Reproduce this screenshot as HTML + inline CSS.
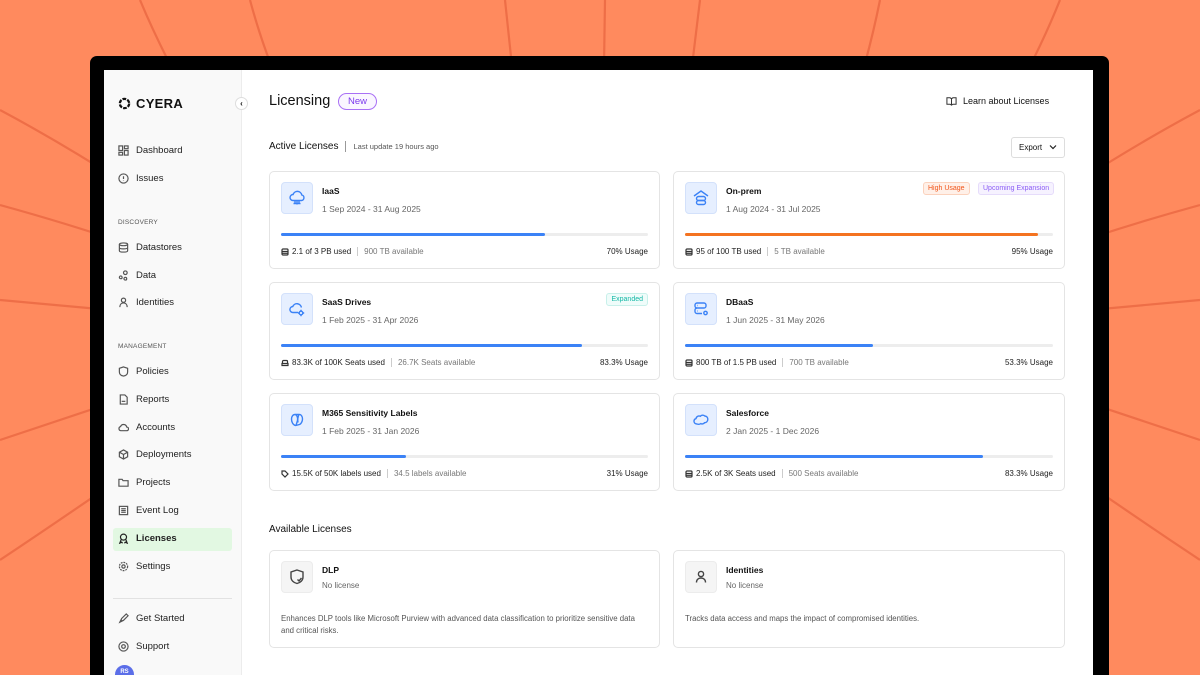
<!DOCTYPE html>
<html style="overflow:hidden;width:1200px;height:675px"><head><meta charset="utf-8"><style>
*{box-sizing:border-box;margin:0;padding:0}
body{width:1200px;height:675px;overflow:hidden;background:#FF8A5E;font-family:"Liberation Sans",sans-serif;color:#111;position:relative}
.abs{position:absolute}
.frame{left:90px;top:56px;width:1019px;height:619px;background:#000;border-radius:7px 7px 0 0}
.screen{left:104px;top:70px;width:989px;height:605px;background:#fff;overflow:hidden}
.side{left:0;top:0;width:138px;height:605px;background:#f9f9f9;border-right:1px solid #ececec}
.nav{position:absolute;left:14px;font-size:9.5px;color:#222;display:flex;align-items:center;gap:7px}
.nav svg{width:11px;height:11px;stroke:#555;fill:none;stroke-width:1.3}
.sec{position:absolute;left:14px;font-size:6.5px;color:#555;letter-spacing:.2px}
.card{position:absolute;border:1px solid #e4e4e4;border-radius:5px;background:#fff}
.ib{position:absolute;left:11px;top:10px;width:32px;height:32px;border-radius:4px;background:#e6efff;border:1px solid #d3e1fb;display:flex;align-items:center;justify-content:center}
.ib svg{width:20px;height:20px;stroke:#3b82f6;fill:none;stroke-width:1.4}
.t{position:absolute;left:52px;top:14px;font-size:8.5px;font-weight:bold;color:#111}
.d{position:absolute;left:52px;top:32px;font-size:8.5px;color:#666}
.bar{position:absolute;left:11px;right:11px;top:61px;height:3px;background:#ededed;border-radius:2px}
.bar i{display:block;height:3px;background:#3b82f6;border-radius:2px}
.f{position:absolute;left:11px;right:11px;top:75px;font-size:8px;color:#222;display:flex;align-items:center}
.f .a{color:#777;border-left:1px solid #ccc;padding-left:6px;margin-left:6px}
.f .u{margin-left:auto}
.f svg{width:8px;height:8px;stroke:#333;fill:none;stroke-width:1.2;margin-right:3px}
.tag{position:absolute;top:10px;font-size:7px;padding:2px 4px;border-radius:3px}
</style></head><body>
<svg class="abs" style="left:0;top:0" width="1200" height="675" stroke="#EE6E47" stroke-width="2.2" fill="none">
<path d="M140 0 Q190 120 330 330"/><path d="M250 0 Q290 150 420 330"/><path d="M505 0 L540 330"/><path d="M605 0 L600 330"/><path d="M700 0 L660 330"/><path d="M880 0 Q850 150 760 330"/><path d="M1060 0 Q1000 150 850 330"/>
<path d="M0 110 Q150 190 330 330"/><path d="M0 205 Q200 260 330 330"/><path d="M0 300 L330 330"/><path d="M0 440 Q150 390 330 330"/>
<path d="M1200 110 Q1050 190 870 330"/><path d="M1200 205 Q1000 260 870 330"/><path d="M1200 300 L870 330"/><path d="M1200 440 Q1050 390 870 330"/>
<path d="M0 560 Q150 460 330 330"/><path d="M1200 560 Q1050 460 870 330"/>
</svg>
<div class="abs frame"></div>
<div class="abs screen">
<div class="abs side">
 <div class="abs" style="left:14px;top:26px;display:flex;align-items:center;gap:5px;font-size:13px;font-weight:bold;letter-spacing:.3px">
  <svg width="13" height="13" viewBox="0 0 14 14"><circle cx="7" cy="7" r="5" fill="none" stroke="#111" stroke-width="2.4" stroke-dasharray="4 1.3"/></svg>CYERA</div>
 <div class="abs" style="left:131px;top:27px;width:13px;height:13px;border-radius:50%;background:#fff;border:1px solid #ddd;font-size:8px;line-height:11px;text-align:center;font-weight:bold">‹</div>
 <div class="nav" style="top:75px"><svg viewBox="0 0 12 12"><rect x="1" y="1" width="4" height="5"/><rect x="7" y="1" width="4" height="3"/><rect x="1" y="8" width="4" height="3"/><rect x="7" y="6" width="4" height="5"/></svg>Dashboard</div>
 <div class="nav" style="top:103px"><svg viewBox="0 0 12 12"><circle cx="6" cy="6" r="5"/><path d="M6 3.5v3M6 8v.5"/></svg>Issues</div>
 <div class="sec" style="top:149px">DISCOVERY</div>
 <div class="nav" style="top:172px"><svg viewBox="0 0 12 12"><ellipse cx="6" cy="2.5" rx="4.5" ry="1.5"/><path d="M1.5 2.5v7c0 1 2 1.5 4.5 1.5s4.5-.5 4.5-1.5v-7M1.5 6c0 1 2 1.5 4.5 1.5s4.5-.5 4.5-1.5"/></svg>Datastores</div>
 <div class="nav" style="top:200px"><svg viewBox="0 0 12 12"><circle cx="8" cy="3" r="2"/><circle cx="3" cy="8" r="1.5"/><circle cx="8" cy="9.5" r="1.5"/></svg>Data</div>
 <div class="nav" style="top:227px"><svg viewBox="0 0 12 12"><circle cx="6" cy="3.5" r="2.3"/><path d="M2 11c0-3 1.8-4.5 4-4.5s4 1.5 4 4.5"/></svg>Identities</div>
 <div class="sec" style="top:273px">MANAGEMENT</div>
 <div class="nav" style="top:296px"><svg viewBox="0 0 12 12"><path d="M6 1l4.5 1.5v4c0 2.5-2 4-4.5 4.5-2.5-.5-4.5-2-4.5-4.5v-4z"/></svg>Policies</div>
 <div class="nav" style="top:324px"><svg viewBox="0 0 12 12"><path d="M2.5 1h5l2.5 2.5V11h-7.5z"/><path d="M4 8h4"/></svg>Reports</div>
 <div class="nav" style="top:352px"><svg viewBox="0 0 12 12"><path d="M3 9.5h6.5a2 2 0 0 0 0-4 3.5 3.5 0 0 0-6.7-.5A2.3 2.3 0 0 0 3 9.5z"/></svg>Accounts</div>
 <div class="nav" style="top:379px"><svg viewBox="0 0 12 12"><path d="M6 1l4.5 2.5v5L6 11 1.5 8.5v-5zM1.5 3.5 6 6l4.5-2.5M6 6v5"/></svg>Deployments</div>
 <div class="nav" style="top:407px"><svg viewBox="0 0 12 12"><path d="M1 2.5h3.5l1 1.5H11v6H1z"/></svg>Projects</div>
 <div class="nav" style="top:435px"><svg viewBox="0 0 12 12"><rect x="1.5" y="1.5" width="9" height="9"/><path d="M3.5 4h5M3.5 6h5M3.5 8h5"/></svg>Event Log</div>
 <div class="abs" style="left:9px;top:458px;width:119px;height:23px;background:#e2f8e2;border-radius:3px"></div>
 <div class="nav" style="top:463px;font-weight:bold"><svg viewBox="0 0 12 12" style="stroke:#222"><circle cx="6" cy="4.5" r="3.3"/><path d="M3.5 7l-1.5 4 2-1 1 1.2M8.5 7l1.5 4-2-1-1 1.2"/></svg>Licenses</div>
 <div class="nav" style="top:491px"><svg viewBox="0 0 12 12"><circle cx="6" cy="6" r="1.8"/><circle cx="6" cy="6" r="4.5" stroke-dasharray="2 1"/></svg>Settings</div>
 <div class="abs" style="left:9px;top:528px;width:119px;border-top:1px solid #e2e2e2"></div>
 <div class="nav" style="top:543px"><svg viewBox="0 0 12 12"><path d="M2 10l2-4 5-5 2 2-5 5zM3 7l2 2"/></svg>Get Started</div>
 <div class="nav" style="top:571px"><svg viewBox="0 0 12 12"><circle cx="6" cy="6" r="5"/><circle cx="6" cy="6" r="2"/></svg>Support</div>
 <div class="abs" style="left:11px;top:595px;width:19px;height:19px;border-radius:50%;background:#5b6ee8;color:#fff;font-size:6px;text-align:center;line-height:14px;font-weight:bold">RS</div>
</div>
<div class="abs" style="left:165px;top:23px;font-size:14.5px">Licensing</div>
<div class="abs" style="left:234px;top:23px;width:39px;height:17px;border:1px solid #a970f5;border-radius:9px;color:#7c3aed;font-size:9.5px;text-align:center;line-height:15px;background:#faf6ff">New</div>
<div class="abs" style="left:842px;top:26px;font-size:9px;display:flex;align-items:center;gap:6px"><svg width="11" height="10" viewBox="0 0 12 10" fill="none" stroke="#333" stroke-width="1.1"><path d="M1 1.5h3.5L6 2.5l1.5-1H11v7H7.5L6 9.5 4.5 8.5H1zM6 2.5v7"/></svg>Learn about Licenses</div>
<div class="abs" style="left:165px;top:71px;font-size:10px;display:flex;align-items:center"><span>Active Licenses</span><span style="border-left:1px solid #999;height:11px;margin:0 7px"></span><span style="font-size:7.5px;color:#555">Last update 19 hours ago</span></div>
<div class="abs" style="left:907px;top:67px;width:54px;height:21px;border:1px solid #ddd;border-radius:3px;font-size:8px;line-height:19px;padding-left:7px">Export <svg style="position:absolute;right:7px;top:6px" width="8" height="6" viewBox="0 0 8 6" fill="none" stroke="#222" stroke-width="1.2"><path d="M1 1.5l3 3 3-3"/></svg></div>

<div class="card" style="left:165px;top:101px;width:391px;height:98px">
 <div class="ib"><svg viewBox="0 0 20 20"><path d="M6 12.5h8.5a2.8 2.8 0 0 0 .3-5.5 4.5 4.5 0 0 0-8.7-.5A3 3 0 0 0 6 12.5zM8 12.5v3M10 12.5v4M12 12.5v3M6.5 15.5h3M10.5 15.5h3"/></svg></div>
 <div class="t">IaaS</div><div class="d">1 Sep 2024 - 31 Aug 2025</div>
 <div class="bar"><i style="width:72%"></i></div>
 <div class="f"><svg viewBox="0 0 8 8"><rect x="1" y="1" width="6" height="6" rx="1"/><path d="M1 3.5h6M1 5.3h6"/></svg>2.1 of 3 PB used<span class="a">900 TB available</span><span class="u">70% Usage</span></div>
</div>
<div class="card" style="left:569px;top:101px;width:392px;height:98px">
 <div class="ib"><svg viewBox="0 0 20 20"><path d="M3 8l7-5 7 5"/><rect x="5.5" y="8.5" width="9" height="4" rx="2"/><rect x="5.5" y="12.5" width="9" height="4" rx="2"/></svg></div>
 <div class="t">On-prem</div><div class="d">1 Aug 2024 - 31 Jul 2025</div>
 <div class="tag" style="left:249px;color:#f0551a;background:#fff0e8;border:1px solid #fbd2bd">High Usage</div>
 <div class="tag" style="left:304px;color:#8b5cf6;background:#f6f2ff;border:1px solid #e6dcfb">Upcoming Expansion</div>
 <div class="bar"><i style="width:96%;background:#f47320"></i></div>
 <div class="f"><svg viewBox="0 0 8 8"><rect x="1" y="1" width="6" height="6" rx="1"/><path d="M1 3.5h6M1 5.3h6"/></svg>95 of 100 TB used<span class="a">5 TB available</span><span class="u">95% Usage</span></div>
</div>
<div class="card" style="left:165px;top:212px;width:391px;height:98px">
 <div class="ib"><svg viewBox="0 0 20 20"><path d="M11 13.5H6a3 3 0 0 1-.2-6 4.5 4.5 0 0 1 8.6 1"/><circle cx="14" cy="14" r="1.8"/><path d="M14 10.8v1.2M14 16v1.2M11 14h1.2M16 14h1.2"/></svg></div>
 <div class="t">SaaS Drives</div><div class="d">1 Feb 2025 - 31 Apr 2026</div>
 <div class="tag" style="right:11px;color:#14b8a6;background:#effcfa;border:1px solid #c8f0ea">Expanded</div>
 <div class="bar"><i style="width:82%"></i></div>
 <div class="f"><svg viewBox="0 0 8 8"><path d="M1.5 4.5V2.5a1 1 0 0 1 1-1h3a1 1 0 0 1 1 1v2M1 4.5h6v2H1z"/></svg>83.3K of 100K Seats used<span class="a">26.7K Seats available</span><span class="u">83.3% Usage</span></div>
</div>
<div class="card" style="left:569px;top:212px;width:392px;height:98px">
 <div class="ib"><svg viewBox="0 0 20 20"><rect x="4" y="4" width="11" height="5" rx="2"/><path d="M11 14.5H6a2 2 0 0 1-2-2v-1.5a2 2 0 0 1 2-2"/><path d="M6.5 6.5h.5M6.5 12h.5"/><circle cx="14.5" cy="14" r="1.7"/></svg></div>
 <div class="t">DBaaS</div><div class="d">1 Jun 2025 - 31 May 2026</div>
 <div class="bar"><i style="width:51%"></i></div>
 <div class="f"><svg viewBox="0 0 8 8"><rect x="1" y="1" width="6" height="6" rx="1"/><path d="M1 3.5h6M1 5.3h6"/></svg>800 TB of 1.5 PB used<span class="a">700 TB available</span><span class="u">53.3% Usage</span></div>
</div>
<div class="card" style="left:165px;top:323px;width:391px;height:98px">
 <div class="ib"><svg viewBox="0 0 20 20"><path d="M8 4.5c-2 0-3.5 2-3.5 4.5 0 3 1.5 6 4 6.5l4-1c1.5-.5 3-3 3-5.5S14 4 12 4.5z"/><path d="M8 4.5c2 .5 3 3 2.5 6l-1.5 5M12 4.5c-1 2-1.5 5-1 8"/></svg></div>
 <div class="t">M365 Sensitivity Labels</div><div class="d">1 Feb 2025 - 31 Jan 2026</div>
 <div class="bar"><i style="width:34%"></i></div>
 <div class="f"><svg viewBox="0 0 8 8"><path d="M1 1h3l3 3-3 3-3-3z"/></svg>15.5K of 50K labels used<span class="a">34.5 labels available</span><span class="u">31% Usage</span></div>
</div>
<div class="card" style="left:569px;top:323px;width:392px;height:98px">
 <div class="ib"><svg viewBox="0 0 20 20"><path d="M6 14c-2 0-3.3-1.5-3-3.2.2-1.3 1.2-2 2-2.2.3-2 2.5-3.2 4.3-2.3 1-1.3 3.2-1.5 4.5-.3 1.8 0 3.3 1.7 3 3.7-.2 1.8-1.5 3-3.200 3-.8 1.2-2.5 1.6-3.7.9-1.2.8-2.800.8-3.900.4z"/></svg></div>
 <div class="t">Salesforce</div><div class="d">2 Jan 2025 - 1 Dec 2026</div>
 <div class="bar"><i style="width:81%"></i></div>
 <div class="f"><svg viewBox="0 0 8 8"><rect x="1" y="1" width="6" height="6" rx="1"/><path d="M1 3.5h6M1 5.3h6"/></svg>2.5K of 3K Seats used<span class="a">500 Seats available</span><span class="u">83.3% Usage</span></div>
</div>

<div class="abs" style="left:165px;top:454px;font-size:10px">Available Licenses</div>
<div class="card" style="left:165px;top:480px;width:391px;height:98px">
 <div class="ib" style="background:#f5f5f5;border-color:#ececec"><svg viewBox="0 0 20 20" style="stroke:#444"><path d="M10 3l6 2v5c0 3.5-2.7 5.7-6 6.5-3.3-.8-6-3-6-6.5V5z"/><path d="M10.5 12.5l1.5 1.5 2.5-3"/></svg></div>
 <div class="t">DLP</div><div class="d" style="top:30px;font-size:8px">No license</div>
 <div class="abs" style="left:11px;top:62px;font-size:7.8px;color:#555;line-height:12px;width:360px">Enhances DLP tools like Microsoft Purview with advanced data classification to prioritize sensitive data and critical risks.</div>
</div>
<div class="card" style="left:569px;top:480px;width:392px;height:98px">
 <div class="ib" style="background:#f5f5f5;border-color:#ececec"><svg viewBox="0 0 20 20" style="stroke:#444"><circle cx="10" cy="7" r="2.6"/><path d="M5.5 15.5c0-3 2-4.5 4.5-4.5s4.5 1.5 4.5 4.5"/></svg></div>
 <div class="t">Identities</div><div class="d" style="top:30px;font-size:8px">No license</div>
 <div class="abs" style="left:11px;top:62px;font-size:7.8px;color:#555;line-height:12px">Tracks data access and maps the impact of compromised identities.</div>
</div>
</div>
</body></html>
